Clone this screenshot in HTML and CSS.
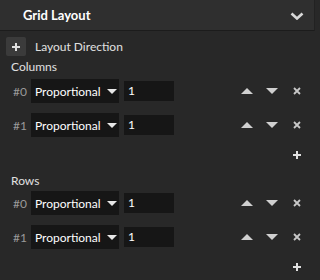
FILE: index.html
```html
<!DOCTYPE html>
<html lang="en">
<head>
  <meta charset="UTF-8" />
  <title>Grid Layout</title>
  <link rel="stylesheet" href="styles.css">
</head>
<body>
  <div class="header">
    <span class="title">Grid Layout</span>
    <svg class="chevron" width="14" height="8" viewBox="0 0 14 8"><path d="M1.5 1.5 L7 6.5 L12.5 1.5" fill="none" stroke="#d8d8d8" stroke-width="2.6"/></svg>
  </div>

  <div class="direction">
    <button class="add-btn" type="button">
      <svg width="10" height="10" viewBox="0 0 10 10"><path d="M5 1 V9 M1 5 H9" stroke="#e0e0e0" stroke-width="2"/></svg>
    </button>
    <span>Layout Direction</span>
  </div>

  <div class="section-label">Columns</div>
  <div class="grid-row">
    <span class="idx">#0</span>
    <div class="select">Proportional <span class="caret"></span></div>
    <div class="num">1</div>
    <div class="actions">
      <svg class="up" width="12" height="6" viewBox="0 0 12 6"><path d="M6 0 L12 6 L0 6 Z" fill="#d0d0d0"/></svg>
      <svg class="down" width="12" height="6" viewBox="0 0 12 6"><path d="M0 0 L12 0 L6 6 Z" fill="#d0d0d0"/></svg>
      <svg class="del" width="8" height="8" viewBox="0 0 8 8"><path d="M1 1 L7 7 M7 1 L1 7" stroke="#c8c8c8" stroke-width="1.8"/></svg>
    </div>
  </div>
  <div class="grid-row">
    <span class="idx">#1</span>
    <div class="select">Proportional <span class="caret"></span></div>
    <div class="num">1</div>
    <div class="actions">
      <svg class="up" width="12" height="6" viewBox="0 0 12 6"><path d="M6 0 L12 6 L0 6 Z" fill="#d0d0d0"/></svg>
      <svg class="down" width="12" height="6" viewBox="0 0 12 6"><path d="M0 0 L12 0 L6 6 Z" fill="#d0d0d0"/></svg>
      <svg class="del" width="8" height="8" viewBox="0 0 8 8"><path d="M1 1 L7 7 M7 1 L1 7" stroke="#c8c8c8" stroke-width="1.8"/></svg>
    </div>
  </div>
  <div class="add-row">
    <svg width="8" height="8" viewBox="0 0 8 8"><path d="M4 0 V8 M0 4 H8" stroke="#e0e0e0" stroke-width="2"/></svg>
  </div>

  <div class="section-label rows-label">Rows</div>
  <div class="grid-row">
    <span class="idx">#0</span>
    <div class="select">Proportional <span class="caret"></span></div>
    <div class="num">1</div>
    <div class="actions">
      <svg class="up" width="12" height="6" viewBox="0 0 12 6"><path d="M6 0 L12 6 L0 6 Z" fill="#d0d0d0"/></svg>
      <svg class="down" width="12" height="6" viewBox="0 0 12 6"><path d="M0 0 L12 0 L6 6 Z" fill="#d0d0d0"/></svg>
      <svg class="del" width="8" height="8" viewBox="0 0 8 8"><path d="M1 1 L7 7 M7 1 L1 7" stroke="#c8c8c8" stroke-width="1.8"/></svg>
    </div>
  </div>
  <div class="grid-row">
    <span class="idx">#1</span>
    <div class="select">Proportional <span class="caret"></span></div>
    <div class="num">1</div>
    <div class="actions">
      <svg class="up" width="12" height="6" viewBox="0 0 12 6"><path d="M6 0 L12 6 L0 6 Z" fill="#d0d0d0"/></svg>
      <svg class="down" width="12" height="6" viewBox="0 0 12 6"><path d="M0 0 L12 0 L6 6 Z" fill="#d0d0d0"/></svg>
      <svg class="del" width="8" height="8" viewBox="0 0 8 8"><path d="M1 1 L7 7 M7 1 L1 7" stroke="#c8c8c8" stroke-width="1.8"/></svg>
    </div>
  </div>
  <div class="add-row">
    <svg width="8" height="8" viewBox="0 0 8 8"><path d="M4 0 V8 M0 4 H8" stroke="#e0e0e0" stroke-width="2"/></svg>
  </div>
</body>
</html>
```

FILE: styles.css
```css
body {
  margin: 0;
  background: #282828;
  color: #e6e6e6;
  font-family: Lato, 'Liberation Sans', sans-serif;
  font-size: 12px;
  width: 320px;
  height: 280px;
  overflow: hidden;
}
.header {
  width: 315px;
  height: 31px;
  box-sizing: border-box;
  background: #2f2f2f;
  border-bottom: 1px solid #1c1c1c;
  border-right: 1px solid #222;
  display: flex;
  align-items: center;
  padding-left: 23px;
  padding-right: 10px;
}
.title {
  flex: 1;
  font-weight: 700;
  font-size: 13px;
  color: #fff;
}
.chevron {
  margin-top: 1px;
}
.direction {
  display: flex;
  align-items: center;
  margin-top: 6px;
  padding-left: 6px;
  height: 19px;
}
.direction span {
  margin-left: 9px;
  color: #e0e0e0;
}
.add-btn {
  width: 20px;
  height: 19px;
  padding: 0;
  border: none;
  border-radius: 2px;
  background: #3b3b3b;
  display: flex;
  align-items: center;
  justify-content: center;
}
.section-label {
  margin-top: 3px;
  padding-left: 11px;
  height: 16px;
  line-height: 16px;
  color: #e0e0e0;
  margin-bottom: 4px;
}
.rows-label {
  margin-top: 10px;
  margin-bottom: 2px;
}
.grid-row {
  display: flex;
  align-items: center;
  height: 24px;
  margin-bottom: 10px;
}
.idx {
  width: 27px;
  text-align: right;
  padding-right: 4px;
  color: #9a9a9a;
}
.select {
  width: 88px;
  height: 24px;
  box-sizing: border-box;
  background: #161616;
  color: #fff;
  display: flex;
  align-items: center;
  padding-left: 4px;
  position: relative;
}
.caret {
  position: absolute;
  left: 76px;
  top: 10px;
  width: 0;
  height: 0;
  border-left: 5px solid transparent;
  border-right: 5px solid transparent;
  border-top: 5px solid #e8e8e8;
}
.num {
  width: 50px;
  height: 20px;
  box-sizing: border-box;
  margin-left: 5px;
  background: #161616;
  color: #fff;
  padding-left: 4px;
  line-height: 20px;
}
.actions {
  display: flex;
  align-items: center;
  margin-left: 67px;
}
.down {
  margin-left: 13px;
}
.del {
  margin-left: 15px;
}
.add-row {
  height: 16px;
  display: flex;
  align-items: center;
  justify-content: flex-end;
  padding-right: 19px;
  margin-top: 1px;
}
```
